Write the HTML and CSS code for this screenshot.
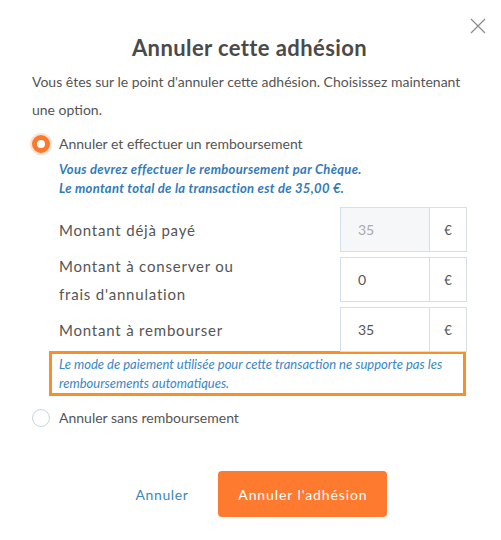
FILE: index.html
```html
<!DOCTYPE html>
<html lang="fr">
<head>
    <meta charset="utf-8" />
    <title>Annuler cette adhésion</title>
    <link rel="stylesheet" href="styles.css">
</head>
<body>
    <div class="modal">
        <button class="close" aria-label="Fermer">
            <svg width="16" height="16" viewBox="0 0 16 16">
                <path d="M1 1 L15 15 M15 1 L1 15" stroke="#8a8a8a" stroke-width="1.2" fill="none"/>
            </svg>
        </button>

        <h1 class="title">Annuler cette adhésion</h1>

        <p class="intro">
            Vous êtes sur le point d'annuler cette adhésion. Choisissez maintenant une option.
        </p>

        <label class="option">
            <span class="radio checked"></span>
            Annuler et effectuer un remboursement
        </label>

        <div class="details">
            <p class="info">
                Vous devrez effectuer le remboursement par Chèque.<br>
                Le montant total de la transaction est de 35,00 €.
            </p>

            <div class="row">
                <span class="label">Montant déjà payé</span>
                <div class="group">
                    <input class="amount" value="35" disabled>
                    <span class="addon">€</span>
                </div>
            </div>
            <div class="row">
                <span class="label">Montant à conserver ou<br>frais d'annulation</span>
                <div class="group">
                    <input class="amount" value="0">
                    <span class="addon">€</span>
                </div>
            </div>
            <div class="row">
                <span class="label">Montant à rembourser</span>
                <div class="group">
                    <input class="amount" value="35">
                    <span class="addon">€</span>
                </div>
            </div>
        </div>

        <div class="warning">
            Le mode de paiement utilisée pour cette transaction ne supporte pas les remboursements automatiques.
        </div>

        <label class="option">
            <span class="radio"></span>
            Annuler sans remboursement
        </label>

        <div class="actions">
            <button class="link">Annuler</button>
            <button class="button">Annuler l'adhésion</button>
        </div>
    </div>
</body>
</html>
```

FILE: styles.css
```css
body {
    margin: 0;
    background: #fff;
    font-family: Lato, "Open Sans", sans-serif;
    color: #555;
}

.modal {
    position: relative;
    width: 501px;
    height: 540px;
    box-sizing: border-box;
    padding: 34px 34px 0 32px;
}

.close {
    position: absolute;
    top: 18px;
    right: 15px;
    border: 0;
    background: none;
    padding: 0;
    cursor: pointer;
}

.title {
    margin: 0;
    text-align: center;
    font-size: 22px;
    line-height: 28px;
    font-weight: 700;
    letter-spacing: 0.4px;
    color: #4a4a4a;
}

.intro {
    margin: 6px 0 7px;
    font-size: 14px;
    line-height: 28px;
    color: #555;
}

.option {
    display: flex;
    align-items: center;
    gap: 9px;
    font-size: 14px;
    line-height: 26px;
    color: #555;
}

.radio {
    width: 18px;
    height: 18px;
    border: 1px solid #c9d3e0;
    border-radius: 50%;
    box-sizing: border-box;
    background: #fff;
}

.radio.checked {
    border: 5.5px solid #fd7a2c;
    box-shadow: 0 0 0 2px #fde2d0;
}

.details {
    padding-left: 27px;
}

.info {
    margin: 3px 0 9px;
    font-size: 13px;
    line-height: 19px;
    font-weight: 700;
    font-style: italic;
    letter-spacing: 0.3px;
    color: #3379b8;
}

.row {
    display: flex;
    align-items: center;
    justify-content: space-between;
    height: 45px;
    margin-bottom: 5px;
}

.label {
    font-size: 15px;
    line-height: 28px;
    color: #555;
    letter-spacing: 0.8px;
}

.group {
    display: flex;
    height: 45px;
    border: 1px solid #d5dfea;
    box-sizing: border-box;
}

.amount {
    width: 89px;
    border: 0;
    border-right: 1px solid #d5dfea;
    padding: 0 0 0 17px;
    box-sizing: border-box;
    font-family: inherit;
    font-size: 14px;
    color: #555;
    background: #fff;
    outline: none;
}

.amount:disabled {
    background: #f5f7f9;
    color: #aaa;
}

.addon {
    width: 36px;
    display: flex;
    align-items: center;
    justify-content: center;
    font-size: 13px;
    color: #555;
}

.warning {
    margin: -6px 1px 9px 17px;
    padding: 1px 0 0 7px;
    border: 3px solid #f7902b;
    font-size: 13px;
    line-height: 19px;
    font-style: italic;
    color: #3a86c4;
}

.actions {
    display: flex;
    justify-content: center;
    align-items: center;
    gap: 30px;
    margin-top: 40px;
    padding-left: 24px;
}

.link {
    border: 0;
    background: none;
    padding: 0;
    font-family: inherit;
    font-size: 14px;
    letter-spacing: 0.6px;
    color: #3d86c0;
    cursor: pointer;
}

.button {
    border: 0;
    border-radius: 4px;
    background: #fd7a2f;
    color: #fff;
    font-family: inherit;
    font-size: 14px;
    letter-spacing: 0.9px;
    padding: 0;
    height: 46px;
    width: 169px;
    cursor: pointer;
}
```
